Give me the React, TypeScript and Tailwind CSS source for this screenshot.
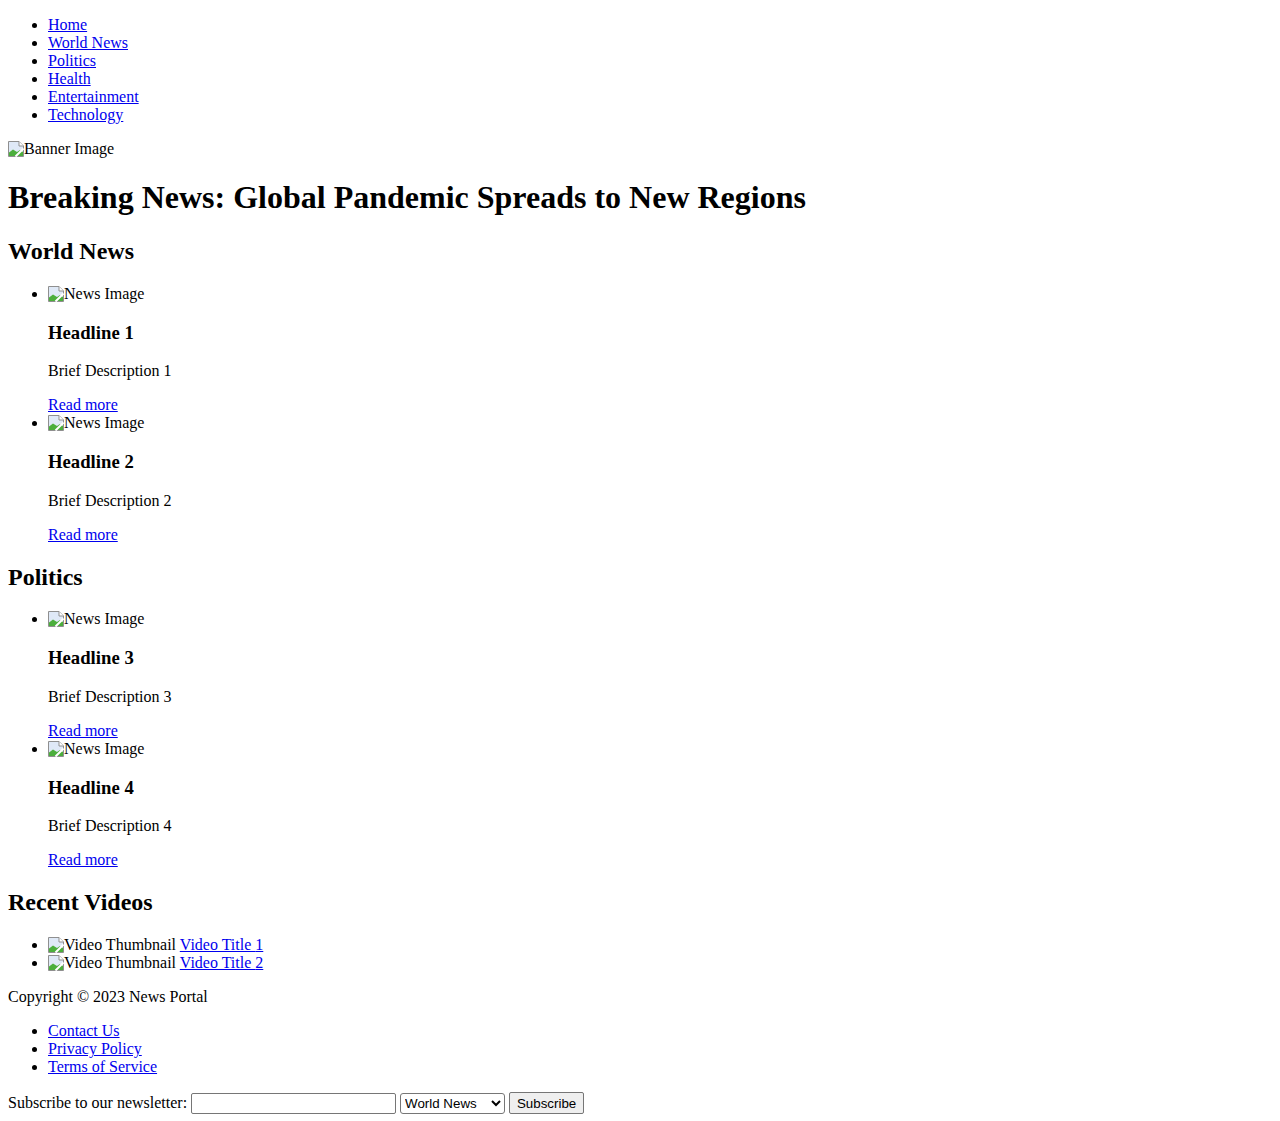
import React from 'react';

function BrokenImg({ alt }: { alt: string }) {
  return (
    <span>
      <svg width="16" height="16" viewBox="0 0 16 16" className="inline align-[-3px]">
        <path d="M0.5 0.5 H11 L15.5 5 V15.5 H0.5 Z" fill="#dfe9f7" stroke="#8f8f8f" />
        <path d="M11 0.5 V5 H15.5" fill="#ffffff" stroke="#8f8f8f" />
        <path d="M1 15 V11.5 L5 8.5 L9 11 L12 9 L15 11 V15 Z" fill="#4caf3c" />
        <path d="M7.5 15.5 L15.5 7.5" stroke="#ffffff" strokeWidth="2" />
      </svg>
      {alt}
    </span>
  );
}

function A({ children }: { children: React.ReactNode }) {
  return (
    <a href="#" className="text-[#0000ee] underline">
      {children}
    </a>
  );
}

const sections = [
  { title: 'World News', items: [1, 2] },
  { title: 'Politics', items: [3, 4] },
];

export default function App() {
  return (
    <div className="m-2 text-black text-[16px] leading-[normal] font-['Liberation_Serif',serif]">
      <nav>
        <ul className="list-disc pl-10 my-4">
          {['Home', 'World News', 'Politics', 'Health', 'Entertainment', 'Technology'].map((n) => (
            <li key={n}>
              <A>{n}</A>
            </li>
          ))}
        </ul>
      </nav>

      <div>
        <BrokenImg alt="Banner Image" />
        <h1 className="text-[32px] font-bold my-[21.44px]">
          Breaking News: Global Pandemic Spreads to New Regions
        </h1>
      </div>

      {sections.map((s) => (
        <section key={s.title}>
          <h2 className="text-[24px] font-bold my-[19.92px]">{s.title}</h2>
          <ul className="list-disc pl-10 my-4">
            {s.items.map((i) => (
              <li key={i}>
                <BrokenImg alt="News Image" />
                <h3 className="text-[18.72px] font-bold my-[18.72px]">Headline {i}</h3>
                <p className="my-4">Brief Description {i}</p>
                <A>Read more</A>
              </li>
            ))}
          </ul>
        </section>
      ))}

      <section>
        <h2 className="text-[24px] font-bold my-[19.92px]">Recent Videos</h2>
        <ul className="list-disc pl-10 my-4">
          {[1, 2].map((i) => (
            <li key={i}>
              <BrokenImg alt="Video Thumbnail" /> <A>Video Title {i}</A>
            </li>
          ))}
        </ul>
      </section>

      <footer>
        <p className="my-4">Copyright © 2023 News Portal</p>
        <ul className="list-disc pl-10 my-4">
          {['Contact Us', 'Privacy Policy', 'Terms of Service'].map((n) => (
            <li key={n}>
              <A>{n}</A>
            </li>
          ))}
        </ul>
        <form className="flex items-center gap-1 h-[22px]">
          <label>Subscribe to our newsletter:</label>
          <input
            type="text"
            className="w-[205px] h-[21px] border border-[#767676] rounded-[2px] px-[2px] bg-white text-[13.33px] font-['Liberation_Sans',sans-serif]"
          />
          <select
            defaultValue="World News"
            className="w-[105px] h-[21px] border border-[#767676] rounded-[3px] bg-white text-[13.33px] font-['Liberation_Sans',sans-serif]"
          >
            <option>World News</option>
            <option>Politics</option>
            <option>Health</option>
            <option>Entertainment</option>
            <option>Technology</option>
          </select>
          <button
            type="submit"
            className="w-[75px] h-[22px] border border-[#767676] rounded-[2px] bg-[#efefef] text-[13.33px] font-['Liberation_Sans',sans-serif]"
          >
            Subscribe
          </button>
        </form>
      </footer>
    </div>
  );
}
